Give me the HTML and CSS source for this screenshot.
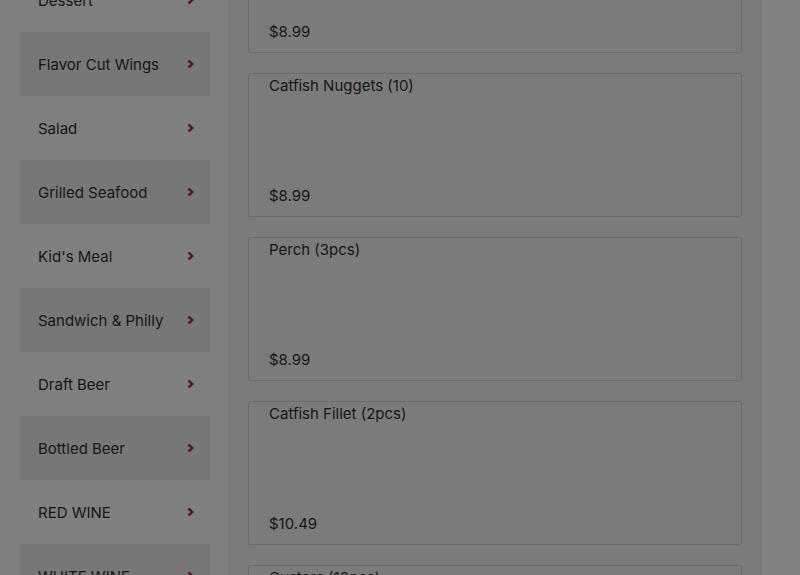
FILE: index.html
```html
<!DOCTYPE html>
<html lang="en">
<head>
<meta charset="utf-8">
<title>Menu</title>
<link rel="stylesheet" href="styles.css">
</head>
<body>
<div class="page">
  <nav class="sidebar">
    <a class="cat alt">Appetizers<svg class="chev" viewBox="0 0 7 10"><path d="M1.5 1.5l3.8 3.5-3.8 3.5"/></svg></a>
    <a class="cat">Dessert<svg class="chev" viewBox="0 0 7 10"><path d="M1.5 1.5l3.8 3.5-3.8 3.5"/></svg></a>
    <a class="cat alt">Flavor Cut Wings<svg class="chev" viewBox="0 0 7 10"><path d="M1.5 1.5l3.8 3.5-3.8 3.5"/></svg></a>
    <a class="cat">Salad<svg class="chev" viewBox="0 0 7 10"><path d="M1.5 1.5l3.8 3.5-3.8 3.5"/></svg></a>
    <a class="cat alt">Grilled Seafood<svg class="chev" viewBox="0 0 7 10"><path d="M1.5 1.5l3.8 3.5-3.8 3.5"/></svg></a>
    <a class="cat">Kid's Meal<svg class="chev" viewBox="0 0 7 10"><path d="M1.5 1.5l3.8 3.5-3.8 3.5"/></svg></a>
    <a class="cat alt">Sandwich &amp; Philly<svg class="chev" viewBox="0 0 7 10"><path d="M1.5 1.5l3.8 3.5-3.8 3.5"/></svg></a>
    <a class="cat">Draft Beer<svg class="chev" viewBox="0 0 7 10"><path d="M1.5 1.5l3.8 3.5-3.8 3.5"/></svg></a>
    <a class="cat alt">Bottled Beer<svg class="chev" viewBox="0 0 7 10"><path d="M1.5 1.5l3.8 3.5-3.8 3.5"/></svg></a>
    <a class="cat">RED WINE<svg class="chev" viewBox="0 0 7 10"><path d="M1.5 1.5l3.8 3.5-3.8 3.5"/></svg></a>
    <a class="cat alt">WHITE WINE<svg class="chev" viewBox="0 0 7 10"><path d="M1.5 1.5l3.8 3.5-3.8 3.5"/></svg></a>
  </nav>
  <main class="items">
    <div class="card"><div class="name">Shrimp Basket</div><div class="price">$8.99</div></div>
    <div class="card"><div class="name">Catfish Nuggets (10)</div><div class="price">$8.99</div></div>
    <div class="card"><div class="name">Perch (3pcs)</div><div class="price">$8.99</div></div>
    <div class="card"><div class="name">Catfish Fillet (2pcs)</div><div class="price">$10.49</div></div>
    <div class="card"><div class="name">Oysters (10pcs)</div><div class="price">$12.99</div></div>
  </main>
  <div class="rest"></div>
</div>
</body>
</html>
```
FILE: styles.css
```css
html, body {
  margin: 0;
  padding: 0;
  background: #7f7f7f;
  font-family: Inter, "Open Sans", sans-serif;
  color: #161616;
  overflow: hidden;
}
.page {
  display: flex;
  align-items: flex-start;
  padding-left: 20px;
  margin-top: -112px;
  height: 800px;
}
.sidebar {
  width: 190px;
  flex: none;
  margin-top: 16px;
  display: flex;
  flex-direction: column;
}
.cat {
  height: 64px;
  display: flex;
  align-items: center;
  justify-content: space-between;
  padding: 0 16px 0 18px;
  font-size: 15px;
}
.cat.alt {
  background: #777777;
}
.chev {
  width: 7px;
  height: 10px;
  fill: none;
  stroke: #561820;
  stroke-width: 2.4;
}
.items {
  margin-left: 18px;
  width: 534px;
  flex: none;
  background: #7b7b7b;
  padding: 21px 20px;
  box-sizing: border-box;
  display: flex;
  flex-direction: column;
  gap: 20px;
  min-height: 800px;
}
.card {
  height: 144px;
  box-sizing: border-box;
  border: 1px solid #6c6c6c;
  border-radius: 2px;
  padding: 1px 20px 9px;
  display: flex;
  flex-direction: column;
  justify-content: space-between;
  font-size: 15px;
  line-height: 22px;
}
.rest {
  flex: 1;
  align-self: stretch;
  background: #828282;
}
```
